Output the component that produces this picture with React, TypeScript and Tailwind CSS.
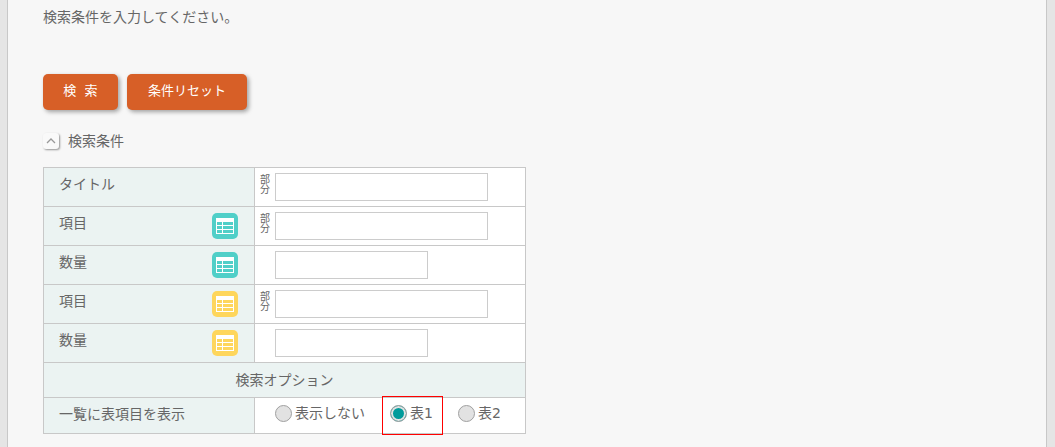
import React, { useState } from 'react';

interface SearchField {
  id: string;
  label: string;
  partial: boolean;
  table?: 'teal' | 'yellow';
}

const fields: SearchField[] = [
  { id: 'title', label: 'タイトル', partial: true },
  { id: 'item1', label: '項目', partial: true, table: 'teal' },
  { id: 'quantity1', label: '数量', partial: false, table: 'teal' },
  { id: 'item2', label: '項目', partial: true, table: 'yellow' },
  { id: 'quantity2', label: '数量', partial: false, table: 'yellow' }
];

const displayOptions = [
  { value: 'none', label: '表示しない' },
  { value: 'table1', label: '表1' },
  { value: 'table2', label: '表2' }
];

const initialValues: Record<string, string> = {
  title: '',
  item1: '',
  quantity1: '',
  item2: '',
  quantity2: ''
};

function TableIcon({ color }: { color: 'teal' | 'yellow' }) {
  return (
    <svg
      viewBox="0 0 26 26"
      className={`block size-[26px] shrink-0 ${color === 'teal' ? 'text-[#50cfc8]' : 'text-[#fed65c]'}`}
      aria-hidden="true"
    >
      <rect width="26" height="26" rx="5" fill="currentColor" />
      <rect x="4" y="5" width="18" height="16" fill="#fff" />
      {[9, 13, 17].map(y => (
        <g key={y} fill="currentColor">
          <rect x="5" y={y} width="5" height="3" />
          <rect x="11" y={y} width="10" height="3" />
        </g>
      ))}
    </svg>
  );
}

function App() {
  const [values, setValues] = useState(initialValues);
  const [display, setDisplay] = useState('table1');
  const [open, setOpen] = useState(true);

  const handleReset = () => {
    setValues(initialValues);
    setDisplay('table1');
  };

  const buttonClass =
    'h-9 rounded-[5px] bg-[#d75f27] pb-px text-[13px] text-white shadow-[2px_2px_4px_rgba(0,0,0,0.35)] cursor-pointer';
  const headClass = 'border border-[#c8c8c8] bg-[#ebf3f2] text-left align-top font-normal';
  const cellClass = 'border border-[#c8c8c8] bg-white p-0 align-top';

  return (
    <div className="min-h-screen bg-[#e5e5e5] pl-[7px] pr-2 font-['DejaVu_Sans','Noto_Sans_CJK_JP',sans-serif] text-sm text-[#666]">
      <main className="min-h-screen border-x border-[#c8c8c8] bg-[#f7f7f7] px-[35px] pt-[7px]">
        <p>検索条件を入力してください。</p>

        <form onSubmit={e => e.preventDefault()}>
          <div className="mt-[47px] flex gap-[9px]">
            <button type="submit" className={`${buttonClass} w-[75px]`}>
              検&nbsp;&nbsp;索
            </button>
            <button type="button" onClick={handleReset} className={`${buttonClass} w-[120px]`}>
              条件リセット
            </button>
          </div>

          <div className="mt-[21px] flex items-center gap-[9px]">
            <button
              type="button"
              aria-label="検索条件"
              aria-expanded={open}
              onClick={() => setOpen(!open)}
              className="flex size-4 items-center justify-center rounded-[3px] bg-[#f9f9f9] shadow-[1px_1px_2px_rgba(0,0,0,0.4)]"
            >
              <svg
                viewBox="0 0 10 6"
                className={`h-[6px] w-[10px] ${open ? '' : 'rotate-180'}`}
                fill="none"
                stroke="#999"
                strokeWidth="1.3"
              >
                <path d="M1 5 5 1l4 4" />
              </svg>
            </button>
            <h2>検索条件</h2>
          </div>

          {open && (
            <table className="mt-4 w-full max-w-[483px] table-fixed border-collapse">
              <colgroup>
                <col className="w-[211px]" />
                <col />
              </colgroup>
              <tbody>
                {fields.map(field => (
                  <tr key={field.id} className="h-[39px]">
                    <th scope="row" className={`${headClass} py-0 pl-[15px] pr-4`}>
                      <div className="flex items-start justify-between">
                        <label htmlFor={field.id} className="pt-[6px]">
                          {field.label}
                        </label>
                        {field.table && (
                          <span className="pt-[6px]">
                            <TableIcon color={field.table} />
                          </span>
                        )}
                      </div>
                    </th>
                    <td className={cellClass}>
                      <div className="flex items-start gap-[5px] pl-[5px] pt-[5px]">
                        <span className="w-[10px] shrink-0 pt-[2px] text-[10px] leading-[10px]">
                          {field.partial && '部分'}
                        </span>
                        <input
                          id={field.id}
                          type="text"
                          value={values[field.id]}
                          onChange={e => setValues({ ...values, [field.id]: e.target.value })}
                          className={`h-7 border border-[#ccc] bg-white px-1 outline-none ${field.partial ? 'w-[213px]' : 'w-[153px]'}`}
                        />
                      </div>
                    </td>
                  </tr>
                ))}
                <tr className="h-[35px]">
                  <th colSpan={2} className="border border-[#c8c8c8] bg-[#ebf3f2] p-0 text-center align-middle font-normal">
                    検索オプション
                  </th>
                </tr>
                <tr className="h-9">
                  <th scope="row" id="display-label" className={`${headClass} pb-0 pl-[15px] pt-[6px]`}>
                    一覧に表項目を表示
                  </th>
                  <td className={cellClass}>
                    <div
                      role="radiogroup"
                      aria-labelledby="display-label"
                      className="flex gap-[25px] pl-5 pt-[5px]"
                    >
                      {displayOptions.map(option => (
                        <label key={option.value} className="relative flex items-center gap-[3px] whitespace-nowrap">
                          <input
                            type="radio"
                            name="display"
                            value={option.value}
                            checked={display === option.value}
                            onChange={() => setDisplay(option.value)}
                            className="size-[17px] appearance-none rounded-full border border-[#a0a0a0] bg-[#e2e2e2] checked:bg-[#009b9b] checked:shadow-[inset_0_0_0_2px_#e2e2e2]"
                          />
                          {option.label}
                          {option.value === 'table1' && (
                            <span className="pointer-events-none absolute -bottom-[12px] -left-2 -right-[10px] -top-[7px] border border-[#f00]" />
                          )}
                        </label>
                      ))}
                    </div>
                  </td>
                </tr>
              </tbody>
            </table>
          )}
        </form>
      </main>
    </div>
  );
}

export default App;
